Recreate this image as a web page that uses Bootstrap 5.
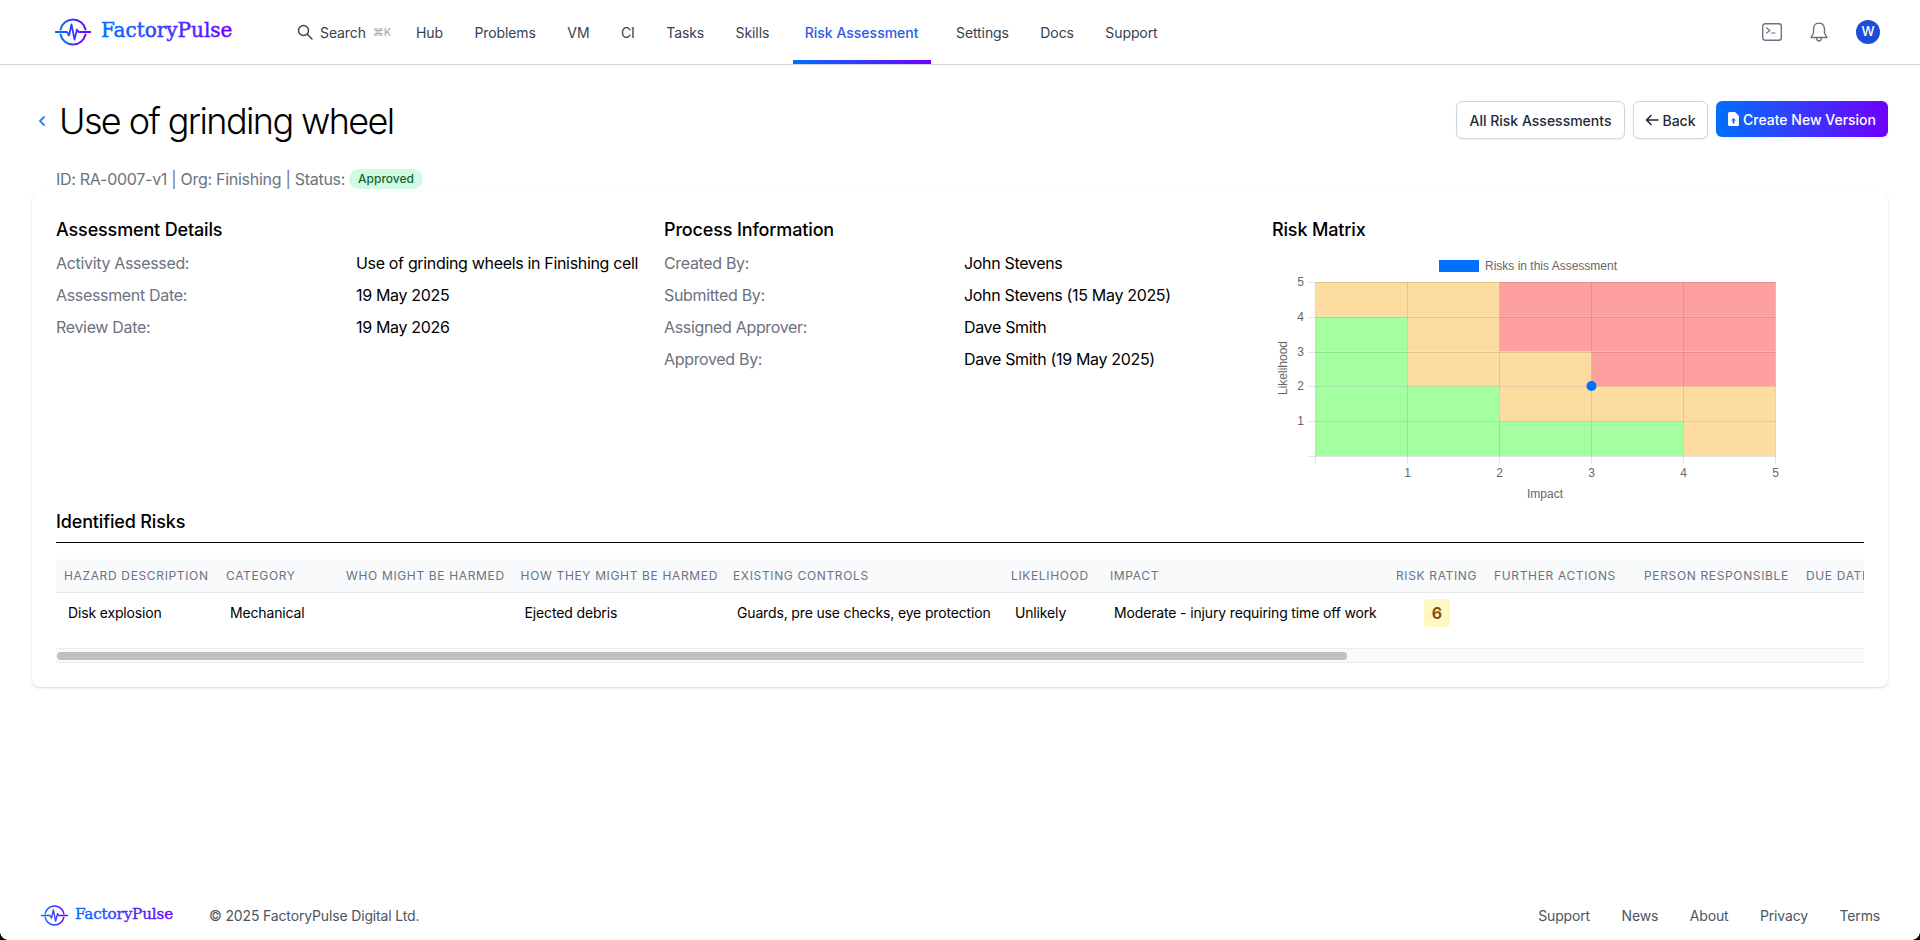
<!DOCTYPE html>
<html lang="en">
<head>
<meta charset="utf-8">
<title>FactoryPulse - Risk Assessment</title>
<link rel="stylesheet" href="https://cdn.jsdelivr.net/npm/bootstrap@5.3.0/dist/css/bootstrap.min.css">
<style>
html,body{height:100%}
body{font-family:Inter,"Liberation Sans",sans-serif;color:#000;background:#fff;overflow:hidden}
.fp-shell{height:940px;display:flex;flex-direction:column;position:relative}
.fp-top{height:65px;border-bottom:1px solid #d1d5db;box-shadow:0 1px 3px rgba(0,0,0,.05);padding:0 40px 0 55px;display:flex;align-items:center;flex:none}
.fp-logo{display:flex;align-items:center;text-decoration:none}
.fp-word{font-family:"DejaVu Serif",serif;font-weight:400}
.fp-top .fp-word{font-size:20px;stroke-width:.45px}
.fp-top .fp-logo{width:242px;gap:10px}
.fp-search{display:flex;align-items:center;color:#374151;font-size:14px;width:119px;letter-spacing:-.1px}
.fp-search svg{margin-right:7px}
.fp-kbd{color:#9ca3af;font-size:11px;margin-left:7px}
.fp-links{display:flex;gap:13.500px;height:64px;margin:0;padding:0;list-style:none;margin-left:-9px}
.fp-links a{display:flex;align-items:center;height:64px;padding:0 9px;font-size:14px;letter-spacing:-.1px;color:#374151;text-decoration:none;position:relative}
.fp-links a.fp-on{color:#2b5be6;font-weight:500;padding:0 13px;margin-right:2px;letter-spacing:0}
.fp-links a.fp-on::after{content:"";position:absolute;left:1px;right:1px;bottom:0;height:4px;background:linear-gradient(90deg,#0070ff,#7000ff)}
.fp-tools{margin-left:auto;display:flex;align-items:center;gap:28px}
.fp-ava{width:24px;height:24px;border-radius:50%;background:#1d4ed8;color:#fff;font-size:13px;font-weight:500;display:flex;align-items:center;justify-content:center}
.fp-head{padding:36px 32px 0 32px;display:flex;justify-content:space-between;align-items:flex-start;flex:none}
.fp-back{color:#2f7bf6;width:27px;display:flex;align-items:center;padding-left:6px;height:40px}
.fp-title{font-size:36px;font-weight:300;line-height:40px;margin:0;color:#000;letter-spacing:-1.600px}
.fp-btn{font-size:14px;font-weight:500;border-radius:6px;height:38px;padding:0 12.500px;background:#fff;border:1px solid #d1d5db;color:#1f2937;box-shadow:0 1px 2px rgba(0,0,0,.05);display:flex;align-items:center;gap:3px}
.fp-btn-back{padding:0 11.500px}
.fp-btn-go{height:36px;border:0;color:#fff;background:linear-gradient(90deg,#0070ff,#7000ff);padding:0 12px;gap:4px}
.fp-sub{padding:24px 0 0 56px;font-size:16px;letter-spacing:-.28px;color:#6b7280;line-height:24px;height:51px;flex:none;display:flex;align-items:center;gap:3px}
.fp-pill{background:#d1fae5;color:#166534;font-size:12px;font-weight:500;letter-spacing:0;border-radius:10px;height:20px;line-height:20px;padding:0 9px;margin-left:1px}
.fp-panel{margin:0 32px;width:1856px;height:495px;border-radius:8px;background:#fff;box-shadow:0 1px 3px rgba(0,0,0,.1),0 1px 2px rgba(0,0,0,.06);padding:24px;flex:none}
.fp-h{font-size:18px;font-weight:500;line-height:28px;margin:0;color:#000;letter-spacing:-.15px}
.fp-rows{margin-top:3px}
.fp-dl{display:flex;height:32px;align-items:center;font-size:16px;line-height:24px;letter-spacing:-.33px}
.fp-dl span:first-child{width:300px;color:#6b7280;flex:none}
.fp-chart{display:block;margin-top:8px;margin-left:-16px}
.fp-chart text{font-family:"Liberation Sans",Arial,sans-serif;font-size:12px;fill:#666}
.fp-ident{border-bottom:1px solid #000;height:36px;margin-top:1px;padding-top:1px}
.fp-scroll{margin-top:16px;overflow:hidden;width:1808px}
.fp-tbl{table-layout:fixed;width:2534px;border-collapse:collapse;margin:0}
.fp-tbl th{height:33px;padding:2px 8px 0;background:#f9fafb;border-bottom:1px solid #e5e7eb;font-size:12px;font-weight:400;letter-spacing:.65px;text-transform:uppercase;color:#6b7280;white-space:nowrap;overflow:hidden;vertical-align:middle}
.fp-tbl td{height:56px;padding:6px 12px 0;font-size:14px;letter-spacing:-.15px;line-height:28px;color:#000;vertical-align:top;white-space:nowrap}
.fp-score{display:inline-block;width:26px;height:28px;line-height:28px;text-align:center;background:#fef9c3;color:#854d0e;font-weight:700;font-size:16px;letter-spacing:0;border-radius:4px;margin-left:24px}
.fp-bar{height:15px;width:1808px;background:#fafafa;border-top:1px solid #ebebeb;border-bottom:1px solid #ebebeb;padding:3px 1px}
.fp-thumb{height:8px;background:#c0c0c0;border-radius:4px}
.fp-foot{margin-top:auto;height:50px;display:flex;align-items:center;padding:0 40px 0 41px;font-size:14px;letter-spacing:-.15px;color:#4b5563;flex:none}
.fp-foot .fp-word{font-size:15.200px;stroke-width:.35px}
.fp-foot .fp-logo{width:168px;gap:7px}
.fp-foot nav{margin-left:auto;display:flex;gap:31.500px}
.fp-foot nav a{color:#4b5563;text-decoration:none}
.fp-corner{position:absolute;bottom:0;width:8px;height:8px;background:radial-gradient(circle at 100% 0,transparent 7.500px,#000 8px)}
.fp-cl{left:0}
.fp-cr{right:0;transform:scaleX(-1)}
</style>
</head>
<body>
<svg width="0" height="0" class="position-absolute">
<defs>
<linearGradient id="fpg" x1="0" x2="1" y1="0" y2="0"><stop offset="0" stop-color="#0070ff"/><stop offset="1" stop-color="#7000ff"/></linearGradient>
<symbol id="fp-mark" viewBox="0 0 36 28">
<path d="M5.500 11.500A12.800 12.800 0 0 1 30.500 11.500M5.500 16.500A12.800 12.800 0 0 0 30.500 16.500" fill="none" stroke="url(#fpg)" stroke-width="2" stroke-linecap="round"/>
<path d="M0.500 14H12L14 17.500L16.500 6.500L19.500 21.500L22 11.500L23.500 14H35.500" fill="none" stroke="url(#fpg)" stroke-width="1.800" stroke-linejoin="round" stroke-linecap="round"/>
</symbol>
</defs>
</svg>
<div class="fp-shell">
<header class="fp-top">
<a class="fp-logo" href="#"><svg width="36" height="28"><use href="#fp-mark"/></svg><svg width="136" height="30"><text class="fp-word" x="0" y="20" fill="url(#fpg)" stroke="url(#fpg)">FactoryPulse</text></svg></a>
<div class="fp-search"><svg width="16" height="16" viewBox="0 0 16 16" fill="none" stroke="#374151" stroke-width="1.4" stroke-linecap="round"><circle cx="6.500" cy="6.500" r="5"/><path d="M10.500 10.500L15 15"/></svg>Search<span class="fp-kbd">⌘K</span></div>
<ul class="fp-links">
<li><a href="#">Hub</a></li><li><a href="#">Problems</a></li><li><a href="#">VM</a></li><li><a href="#">CI</a></li><li><a href="#">Tasks</a></li><li><a href="#">Skills</a></li><li><a href="#" class="fp-on">Risk Assessment</a></li><li><a href="#">Settings</a></li><li><a href="#">Docs</a></li><li><a href="#">Support</a></li>
</ul>
<div class="fp-tools">
<svg width="20" height="18" viewBox="0 0 20 18" fill="none" stroke="#6b7280" stroke-width="1.4"><rect x=".7" y=".7" width="18.600" height="16.600" rx="2.500"/><path d="M4.500 5L8 7.500L4.500 10M9.500 10H13" stroke-linecap="round" stroke-linejoin="round" stroke-width="1.200"/></svg>
<svg width="18" height="20" viewBox="0 0 18 20" fill="none" stroke="#6b7280" stroke-width="1.4" stroke-linejoin="round"><path d="M9 1C5.700 1 3.500 3.500 3.500 7V11L1 15.500H17L14.500 11V7C14.500 3.500 12.300 1 9 1Z"/><path d="M6.500 16C6.700 18 7.700 19 9 19S11.300 18 11.500 16"/></svg>
<div class="fp-ava">W</div>
</div>
</header>

<div class="fp-head">
<div class="d-flex align-items-center">
<a class="fp-back" href="#"><svg width="8" height="12" viewBox="0 0 8 12" fill="none" stroke="currentColor" stroke-width="1.800" stroke-linecap="round" stroke-linejoin="round"><path d="M6 2L2 6L6 10"/></svg></a>
<h1 class="fp-title">Use of grinding wheel</h1>
</div>
<div class="d-flex gap-2">
<button class="fp-btn" type="button">All Risk Assessments</button>
<button class="fp-btn fp-btn-back" type="button"><svg width="14" height="14" viewBox="0 0 14 14" fill="none" stroke="currentColor" stroke-width="1.600" stroke-linecap="round" stroke-linejoin="round"><path d="M13 7H1.500M6 2.500L1.500 7L6 11.500"/></svg>Back</button>
<button class="fp-btn fp-btn-go" type="button"><svg width="11" height="14" viewBox="0 0 11 14"><path fill="#fff" fill-rule="evenodd" d="M1.500 0H7L11 4V12.500A1.500 1.500 0 0 1 9.500 14H1.500A1.500 1.500 0 0 1 0 12.500V1.500A1.500 1.500 0 0 1 1.500 0ZM5.500 6L3 8.500H4.700V11.500H6.300V8.500H8Z"/></svg>Create New Version</button>
</div>
</div>
<div class="fp-sub"><span>ID: RA-0007-v1 | Org: Finishing | Status:</span><span class="fp-pill">Approved</span></div>

<section class="fp-panel">
<div class="row gx-3 gy-0">
<div class="col-4">
<h2 class="fp-h">Assessment Details</h2>
<div class="fp-rows">
<div class="fp-dl"><span>Activity Assessed:</span><span>Use of grinding wheels in Finishing cell</span></div>
<div class="fp-dl"><span>Assessment Date:</span><span>19 May 2025</span></div>
<div class="fp-dl"><span>Review Date:</span><span>19 May 2026</span></div>
</div>
</div>
<div class="col-4">
<h2 class="fp-h">Process Information</h2>
<div class="fp-rows">
<div class="fp-dl"><span>Created By:</span><span>John Stevens</span></div>
<div class="fp-dl"><span>Submitted By:</span><span>John Stevens (15 May 2025)</span></div>
<div class="fp-dl"><span>Assigned Approver:</span><span>Dave Smith</span></div>
<div class="fp-dl"><span>Approved By:</span><span>Dave Smith (19 May 2025)</span></div>
</div>
</div>
<div class="col-4">
<h2 class="fp-h">Risk Matrix</h2>
<svg class="fp-chart" width="540" height="254" viewBox="1256 252 540 254" role="img">
<g>
<rect x="1315.500" y="282" width="184" height="34.800" fill="#fddc9f"/>
<rect x="1499.500" y="282" width="276" height="34.800" fill="#ffa0a0"/>
<rect x="1315.500" y="316.800" width="92" height="34.800" fill="#a3ff9f"/>
<rect x="1407.500" y="316.800" width="92" height="34.800" fill="#fddc9f"/>
<rect x="1499.500" y="316.800" width="276" height="34.800" fill="#ffa0a0"/>
<rect x="1315.500" y="351.600" width="92" height="34.800" fill="#a3ff9f"/>
<rect x="1407.500" y="351.600" width="184" height="34.800" fill="#fddc9f"/>
<rect x="1591.500" y="351.600" width="184" height="34.800" fill="#ffa0a0"/>
<rect x="1315.500" y="386.400" width="184" height="34.800" fill="#a3ff9f"/>
<rect x="1499.500" y="386.400" width="276" height="34.800" fill="#fddc9f"/>
<rect x="1315.500" y="421.200" width="368" height="34.800" fill="#a3ff9f"/>
<rect x="1683.500" y="421.200" width="92" height="34.800" fill="#fddc9f"/>
</g>
<g stroke="#000" stroke-opacity=".1" stroke-width="1" shape-rendering="crispEdges">
<path d="M1307.500 282H1776M1307.500 317H1776M1307.500 352H1776M1307.500 386H1776M1307.500 421H1776M1307.500 456H1776"/>
<path d="M1315.500 282V464M1407.500 282V464M1499.500 282V464M1591.500 282V464M1683.500 282V464M1775.500 282V464"/>
</g>
<rect x="1439" y="260" width="40" height="12" fill="#0070ff"/>
<text x="1485" y="270">Risks in this Assessment</text>
<g text-anchor="end">
<text x="1304" y="286">5</text><text x="1304" y="321">4</text><text x="1304" y="356">3</text><text x="1304" y="390">2</text><text x="1304" y="425">1</text>
</g>
<g text-anchor="middle">
<text x="1407.500" y="477">1</text><text x="1499.500" y="477">2</text><text x="1591.500" y="477">3</text><text x="1683.500" y="477">4</text><text x="1775.500" y="477">5</text>
<text x="1545" y="498">Impact</text>
<text transform="translate(1287 368) rotate(-90)">Likelihood</text>
</g>
<circle cx="1591.500" cy="386" r="5" fill="#0070ff"/>
</svg>
</div>
</div>
<h2 class="fp-h fp-ident">Identified Risks</h2>
<div class="fp-scroll">
<table class="fp-tbl">
<colgroup><col style="width:162px"><col style="width:120px"><col style="width:174.600px"><col style="width:212.400px"><col style="width:278px"><col style="width:99px"><col style="width:286px"><col style="width:98px"><col style="width:150px"><col style="width:162px"><col style="width:792px"></colgroup>
<thead><tr><th>Hazard Description</th><th>Category</th><th>Who Might Be Harmed</th><th>How They Might Be Harmed</th><th>Existing Controls</th><th>Likelihood</th><th>Impact</th><th>Risk Rating</th><th>Further Actions</th><th>Person Responsible</th><th>Due Date</th></tr></thead>
<tbody><tr><td>Disk explosion</td><td>Mechanical</td><td></td><td>Ejected debris</td><td>Guards, pre use checks, eye protection</td><td>Unlikely</td><td>Moderate - injury requiring time off work</td><td><span class="fp-score">6</span></td><td></td><td></td><td></td></tr></tbody>
</table>
</div>
<div class="fp-bar"><div class="fp-thumb" style="width:1290px"></div></div>
</section>

<footer class="fp-foot">
<a class="fp-logo" href="#"><svg width="27" height="21"><use href="#fp-mark"/></svg><svg width="104" height="24"><text class="fp-word" x="0" y="16" fill="url(#fpg)" stroke="url(#fpg)">FactoryPulse</text></svg></a>
<span>© 2025 FactoryPulse Digital Ltd.</span>
<nav><a href="#">Support</a><a href="#">News</a><a href="#">About</a><a href="#">Privacy</a><a href="#">Terms</a></nav>
</footer>
<div class="fp-corner fp-cl"></div><div class="fp-corner fp-cr"></div>
</div>
<script src="https://cdn.jsdelivr.net/npm/bootstrap@5.3.0/dist/js/bootstrap.bundle.min.js"></script>
</body>
</html>
